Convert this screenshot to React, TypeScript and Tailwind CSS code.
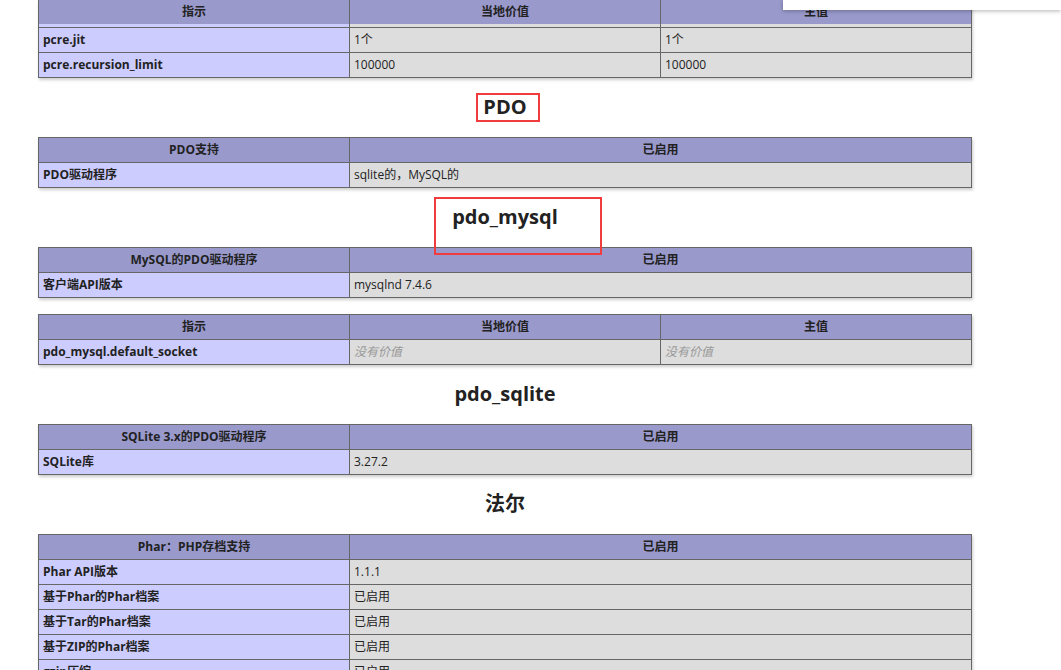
const font = { fontFamily: '"Open Sans","Noto Sans CJK SC",sans-serif' };

type Row = { cells: string[]; header?: boolean; italic?: boolean };

const Table = ({ rows, cols }: { rows: Row[]; cols: number }) => (
  <table className="w-[934px] border-collapse table-fixed shadow-[1px_2px_3px_#ccc] text-[12px] text-[#222]">
    <colgroup>
      <col className="w-[311px]" />
      {cols === 3 ? (
        <>
          <col className="w-[311px]" />
          <col />
        </>
      ) : (
        <col />
      )}
    </colgroup>
    <tbody>
      {rows.map((r, i) => (
        <tr key={i} className="h-[25px]">
          {r.cells.map((c, j) =>
            r.header ? (
              <td key={j} className="bg-[#9999cc] border border-[#666] font-bold text-center px-1">
                {c}
              </td>
            ) : (
              <td
                key={j}
                className={
                  j === 0
                    ? "bg-[#ccccff] border border-[#666] font-bold px-1"
                    : `bg-[#dddddd] border border-[#666] px-1 ${r.italic ? "italic text-[#999]" : ""}`
                }
              >
                {c}
              </td>
            )
          )}
        </tr>
      ))}
    </tbody>
  </table>
);

const Heading = ({ children, box }: { children: string; box?: string }) => (
  <div className="h-[59px] flex items-center justify-center relative">
    <h2 className="text-[20px] font-bold text-[#222]">{children}</h2>
    {box && <div className={`absolute border-2 border-[#f03c3c] ${box}`} />}
  </div>
);

export default function App() {
  return (
    <div className="bg-white w-[1061px] h-[670px] overflow-hidden relative" style={font}>
      <div className="absolute right-0 top-0 w-[278px] h-[10px] bg-white shadow-[0_1px_4px_rgba(0,0,0,0.3)] z-10" />
      <div className="w-[934px] ml-[38px]">
        <table className="w-[934px] border-collapse table-fixed shadow-[1px_2px_3px_#ccc] text-[12px] text-[#222]">
          <colgroup>
            <col className="w-[311px]" />
            <col className="w-[311px]" />
            <col />
          </colgroup>
          <tbody>
            <tr className="h-[24px]">
              <td className="bg-[#9999cc] font-bold text-center border-x border-[#666]">指示</td>
              <td className="bg-[#9999cc] font-bold text-center border-x border-[#666]">当地价值</td>
              <td className="bg-[#9999cc] font-bold text-center border-x border-[#666]">主值</td>
            </tr>
            <tr className="h-[3px]">
              <td className="bg-[#ccccff] p-0 border-x border-[#666]" />
              <td className="bg-[#dddddd] p-0 border-x border-[#666]" />
              <td className="bg-[#dddddd] p-0 border-x border-[#666]" />
            </tr>
            {[
              ["pcre.jit", "1个", "1个"],
              ["pcre.recursion_limit", "100000", "100000"],
            ].map((r) => (
              <tr key={r[0]} className="h-[25px]">
                <td className="bg-[#ccccff] border border-[#666] font-bold px-1">{r[0]}</td>
                <td className="bg-[#dddddd] border border-[#666] px-1">{r[1]}</td>
                <td className="bg-[#dddddd] border border-[#666] px-1">{r[2]}</td>
              </tr>
            ))}
          </tbody>
        </table>
      </div>
      <div className="ml-[38px] w-[934px]">
        <Heading box="left-[438px] top-[15px] w-[64px] h-[29px]">PDO</Heading>
        <Table
          cols={2}
          rows={[
            { header: true, cells: ["PDO支持", "已启用"] },
            { cells: ["PDO驱动程序", "sqlite的，MySQL的"] },
          ]}
        />
        <Heading box="left-[396px] top-[9px] w-[168px] h-[58px]">pdo_mysql</Heading>
        <div className="flex flex-col gap-[16px]">
          <Table
            cols={2}
            rows={[
              { header: true, cells: ["MySQL的PDO驱动程序", "已启用"] },
              { cells: ["客户端API版本", "mysqlnd 7.4.6"] },
            ]}
          />
          <Table
            cols={3}
            rows={[
              { header: true, cells: ["指示", "当地价值", "主值"] },
              { italic: true, cells: ["pdo_mysql.default_socket", "没有价值", "没有价值"] },
            ]}
          />
        </div>
        <Heading>pdo_sqlite</Heading>
        <Table
          cols={2}
          rows={[
            { header: true, cells: ["SQLite 3.x的PDO驱动程序", "已启用"] },
            { cells: ["SQLite库", "3.27.2"] },
          ]}
        />
        <Heading>法尔</Heading>
        <Table
          cols={2}
          rows={[
            { header: true, cells: ["Phar：PHP存档支持", "已启用"] },
            { cells: ["Phar API版本", "1.1.1"] },
            { cells: ["基于Phar的Phar档案", "已启用"] },
            { cells: ["基于Tar的Phar档案", "已启用"] },
            { cells: ["基于ZIP的Phar档案", "已启用"] },
            { cells: ["gzip压缩", "已启用"] },
          ]}
        />
      </div>
    </div>
  );
}
